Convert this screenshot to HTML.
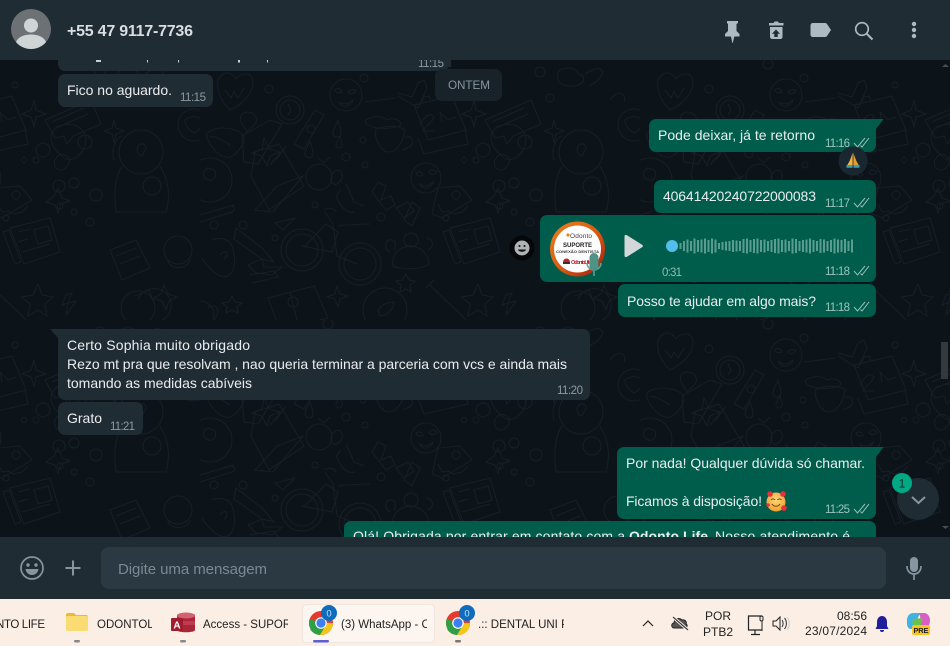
<!DOCTYPE html>
<html><head><meta charset="utf-8"><style>
html,body{margin:0;padding:0;width:950px;height:646px;overflow:hidden;background:#0c1319}
svg{display:block}
text{font-family:"Liberation Sans","DejaVu Sans",sans-serif;white-space:pre}
.m{font-size:14px;fill:#e9edef}
.t{font-size:11.5px;fill:#8e9aa2}
.to{font-size:11.5px;fill:#9cc4bb}
.b{font-size:11.5px;fill:#1f1f1f}
</style></head><body>
<svg width="950" height="646" viewBox="0 0 950 646" xmlns="http://www.w3.org/2000/svg">
<defs>
<pattern id="wall" x="200" y="60" width="440" height="260" patternUnits="userSpaceOnUse">
<g fill="none" stroke="#161f26" stroke-width="1">
<path d="M18 20c6-12 16-6 18-1 6-8 18-7 17 5-1 12-14 22-23 26-8-8-14-18-12-30z"/><path d="M25 30l6 8 3-6 4 6 6-10"/>
<circle cx="69" cy="29" r="4"/><circle cx="90" cy="50" r="14"/><circle cx="90" cy="50" r="10"/><path d="M88 44l3 6-3 5"/>
<circle cx="146" cy="35" r="16"/><path d="M135 30c3-3 6-1 7 2-3 1-6 1-7-2zM148 32c2-3 6-3 8-1-2 3-6 4-8 1zM139 42c5 3 10 2 14-2-1 6-11 9-14 2z"/>
<path d="M198 36l20 12 9-20-3-8-6 3-6 14-14-4M195 38l-30 4"/><circle cx="164" cy="18" r="4"/><circle cx="128" cy="4" r="5"/>
<path d="M214 45l38-9 14 34-38 10z"/><path d="M222 42l2-5 5-1 2 5M220 65c3-6 9-14 14-8-1 5-8 8-11 14h12M242 62l-2-10 8 8 8-3"/><path d="M218 78l6 16 44-10-3-14"/>
<path d="M285 60l46-20 10 24-28 12-6 8-3-8-9 2z"/><path d="M292 62l32-14M296 68l32-14"/>
<path d="M274 40l2 10 10 4-10 3-2 10-3-10-9-3 9-4z"/><path d="M354 60l2 8 8 3-8 3-2 9-2-9-8-3 8-3z"/><circle cx="340" cy="12" r="5"/><circle cx="350" cy="38" r="4"/>
<path d="M360 10c8-4 16-2 18 4 6 0 8 8 2 10-6 4-20 2-22-4-1-5 0-8 2-10z"/>
<path d="M182 48c-2 6-5 9-5 13 0 6 8 5 8 0 0-4-2-8-3-13z" transform="translate(-44 12)"/>
<path d="M42 76l28-16 12 4-24 40-14-2zM115 50l9 5-20 34-10-5z"/><circle cx="111" cy="69" r="4"/>
<path d="M7 73c10-8 26-5 34 0 4 4 4 8 0 14-4 6-10 12-16 10-8-2-20-16-18-24z"/><path d="M30 85c-6-4-16-10-20-8"/>
<path d="M64 78l5 11 11 3-10 4-3 10-5-10-10-3 10-4z"/><path d="M72 60c7 0 12 6 8 12l-8 8-6-10c-2-5 1-10 6-10z" transform="translate(-25 -8)"/>
<path d="M110 82c-3 6-5 8-5 12 0 5 8 5 8 0 0-4-1-7-3-12zM140 76c-2 4-4 6-4 9 0 4 6 4 6 0 0-3-1-6-2-9z"/>
<path d="M175 70c12-6 25-4 30 0-2 12-8 22-16 22-8 0-14-12-14-22zM205 78c6-4 10 2 6 8l-8 4"/><path d="M165 62c2-5 14-8 22-2 6-3 14 0 14 5-8 5-30 5-36-3z"/>
<path d="M55 92l24-8 25 42-35 24-18-34z"/><path d="M76 100l10-14"/><path d="M70 105l10-12"/><path d="M55 150l22-24 26-10-30 36z"/>
<circle cx="119" cy="117" r="13"/><path d="M134 112c4-4 10 0 8 6-2 4-6 8-8 6-4-2-4-8 0-12z"/><path d="M118 98l6 5 6-6"/>
<circle cx="226" cy="118" r="15"/><path d="M216 113c3-2 6-1 7 2-3 2-6 1-7-2zM229 112c2-3 6-2 8 0-2 3-6 4-8 0zM220 124c4 3 9 2 13-2-1 6-11 9-13 2z"/>
<path d="M301 95c-10-8-14-20-4-28 8-4 18-4 24 2 8 8 6 20-4 28-6 4-12 3-16-2z"/><circle cx="283" cy="90" r="7"/><circle cx="325" cy="82" r="7"/><path d="M295 100c4-8 10-6 14-2 2 6-4 12-8 12s-8-4-6-10z"/><circle cx="299" cy="126" r="6"/><circle cx="314" cy="123" r="5"/>
<circle cx="381" cy="92" r="22"/><path d="M378 86c4-4 8-2 8 2l-4 8c-4 0-6-6-4-10z"/><path d="M362 106c-8 12-8 30-6 46h50c4-14 4-30-6-46"/><path d="M354 100c-4-12 4-24 8-24"/><circle cx="392" cy="126" r="9"/>
<circle cx="434" cy="65" r="16"/><path d="M425 60c6-5 18-5 18 4-3 6-9 9-9 9s-10-6-9-13z"/>
<path d="M385 14c8-5 14-8 18-2-2 8-10 12-14 14"/><path d="M410 40c6-10 18-8 14 2"/>
<circle cx="10" cy="120" r="22"/><path d="M8 108c-6 2-6 10 0 12s10-6 6-10z"/>
<path d="M141 130c-4 4-6 6-2 12 4 8 10 12 16 10"/><path d="M146 124l8 18 10 4"/>
<path d="M178 122l8 4-5 14 10-4 4 9-9 5-14-18zM196 148l12-6 6 9-10 7zM212 142l8 6-8 18-8-6z"/>
<path d="M240 122l22-2 12 14-30 18-10-4z" transform="translate(-2 6)"/><circle cx="256" cy="135" r="4"/><path d="M238 144l4 8 6-1 6 3 8-2 6-6"/>
<path d="M294 136l4-8 4 10 8 3-9 3-3 9-3-8-9-3z"/><circle cx="336" cy="135" r="6"/><circle cx="300" cy="146" r="3"/>
<circle cx="43" cy="165" r="4"/><circle cx="75" cy="178" r="3"/><circle cx="14" cy="165" r="4"/><circle cx="181" cy="157" r="4"/><circle cx="146" cy="97" r="4"/><circle cx="165" cy="105" r="3"/><circle cx="115" cy="145" r="3"/><circle cx="163" cy="80" r="3"/><circle cx="276" cy="100" r="3"/><circle cx="255" cy="25" r="3"/><circle cx="264" cy="100" r="2.5"/><circle cx="246" cy="158" r="3"/><circle cx="330" cy="162" r="4"/><circle cx="314" cy="152" r="3"/>
<path d="M36 168l26 20 12 14-12-3-28-20z"/><path d="M0 155l34-10"/><path d="M0 162l32-10c3-1 3-5 0-6"/>
<path d="M75 163l20-5-12 12z"/>
<circle cx="102" cy="190" r="21"/><circle cx="102" cy="190" r="16"/><circle cx="160" cy="204" r="21"/><circle cx="160" cy="204" r="16"/><path d="M105 186l21-22 12 8-6 20-30-6zM125 152l8 12 4 32 20 8M124 150c4-3 10-2 12 2M138 166c6-1 24-2 32-2"/>
<path d="M193 206c-2-10 4-18 16-20 10 0 18 6 20 16 0 8-28 8-36 4z"/><circle cx="211" cy="180" r="7"/><path d="M190 192c-8-4-4-14 2-12 4 0 4 6 2 10M228 190c8-4 4-12-2-12"/>
<path d="M250 168l40-10 10 34-36 12zM243 172l6-2 12 32-6 2z"/><path d="M258 172l12-3M258 182l10-3M262 192l28-8M274 170l14-4 4 14-14 4z"/>
<path d="M12 180c8-4 18 0 20 6 4 12 4 24-4 30-8 4-20-8-26-18"/><path d="M20 195c6-8 10 0 4 4"/>
<path d="M48 205l14-6 2 8 18 0-10 8-16-2z"/><path d="M50 215l24-4 4 6-26 6"/>
<path d="M68 238l46-12 14 32-48 12z"/><path d="M90 232l8 32"/><circle cx="93" cy="242" r="5"/>
<path d="M137 226l3 8 8 2-8 3-2 8-3-8-8-2 8-3z"/><path d="M206 214l3 6 6 1-5 4 1 7-5-3-6 3 1-7-5-4 6-1z"/><path d="M278 224l4 11 11 2-8 7 2 12-9-6-10 6 2-12-9-7 12-2z"/><path d="M32 236l3 6 7 1-5 4 1 6-6-3-6 3 1-6-5-4 7-1z"/>
<circle cx="185" cy="250" r="22"/><path d="M178 250c6-8 14-8 16-8 0 6-6 14-14 14z"/>
<path d="M230 225l8 8 44 42M234 220l-8 8"/><path d="M306 235l6-2-4 10 8-2-10 14 2-12-6 2z"/>
<path d="M395 246l-6-16 -14 6M378 240a17 17 0 1 1 20 22"/><circle cx="378" cy="248" r="17"/>
<path d="M8 248c8-6 14 2 6 12"/><circle cx="0" cy="255" r="14"/>
<circle cx="418" cy="190" r="14"/><path d="M408 200c0 10 20 10 22 0"/>
<path d="M350 190l26-10 14 28-28 12z"/><path d="M356 196l20-8M360 204l20-8"/>
<path d="M404 225l4 9 9 3-8 4-3 9-4-9-9-3 8-4z"/>
</g>
</pattern>
<g id="tk" fill="none" stroke="#9fbdb6" stroke-width="1"><path d="M0 6l3.500 4L11 1M6.500 8.500L8 10l7-9"/></g>
<linearGradient id="ring" x1="0" y1="0" x2="1" y2="1"><stop offset="0" stop-color="#e8801f"/><stop offset=".55" stop-color="#d65a12"/><stop offset="1" stop-color="#9e1111"/></linearGradient>
<radialGradient id="emo" cx=".5" cy=".4" r=".6"><stop offset="0" stop-color="#fbd97a"/><stop offset="1" stop-color="#f0a030"/></radialGradient>
<clipPath id="cc"><rect x="0" y="60" width="950" height="477"/></clipPath>
<clipPath id="cw"><rect x="302" y="600" width="125" height="40"/></clipPath>
<clipPath id="cd"><rect x="470" y="600" width="94" height="40"/></clipPath>
<clipPath id="ca"><rect x="200" y="600" width="88" height="40"/></clipPath>
<clipPath id="co"><rect x="90" y="600" width="62" height="40"/></clipPath>
<g id="chrome"><circle r="12" fill="#e33b2e"/><path d="M-10.400 -6A12 12 0 0 0 -6 10.400L0 0z" fill="#2f9e44" transform="rotate(-10)"/><path d="M12 0A12 12 0 0 1 -4 11.300L0 4 5 0z" fill="#f5c518"/><path d="M-11 6A12 12 0 0 0 -1 12L5 2 0 5z" fill="#2f9e44"/><circle r="5.800" fill="#fff"/><circle r="4.600" fill="#3d7ff0"/></g>
</defs>

<rect width="950" height="646" fill="#0c1319"/>
<g clip-path="url(#cc)">
<rect y="60" width="950" height="477" fill="url(#wall)"/>

<!-- partial -->
<path d="M58 50h393v17h-3a7 4 0 0 1-7 4H65a7 7 0 0 1-7-7z" fill="#202c33"/>
<g fill="#c8ced1"><rect x="96" y="60" width="5" height="2"/><rect x="147" y="60" width="1" height="2.500"/><rect x="178" y="60" width="1" height="2.500"/><rect x="238" y="60" width="2" height="2.500"/><rect x="267" y="60" width="1" height="2.500"/></g>
<text x="418" y="67" class="t" textLength="26" fill="#8696a0">11:15</text>

<rect x="58" y="74" width="155" height="33" rx="7" fill="#202c33"/>
<text x="67" y="95" class="m" textLength="105">Fico no aguardo.</text>
<text x="180" y="101" class="t" textLength="26">11:15</text>

<rect x="435" y="69" width="67" height="32" rx="7" fill="#182229"/>
<text x="448" y="89" font-size="11.700" fill="#8696a0" textLength="42">ONTEM</text>

<!-- out 1 -->
<path d="M649 126a7 7 0 0 1 7-7h227.500l-7.500 10v16a7 7 0 0 1-7 7H656a7 7 0 0 1-7-7z" fill="#005c4b"/>
<text x="658" y="140" class="m" textLength="157">Pode deixar, já te retorno</text>
<text x="825" y="147" class="to" textLength="25">11:16</text>
<use href="#tk" x="854" y="137"/>
<circle cx="853" cy="161" r="14.500" fill="#1a2730"/>
<path d="M852.600 152.500c-.8 3-2 6-3 8.500l-2.500 4.500 5.500.5z" fill="#f2b43f"/><path d="M853.400 152.500c.8 3 2 6 3 8.500l2.500 4.500-5.500.5z" fill="#e89e2c"/><path d="M846.500 165h6v2.800h-6zM853.500 165h6v2.800h-6z" fill="#3aa0b5"/>

<rect x="654" y="180" width="222" height="33" rx="7" fill="#005c4b"/>
<text x="663" y="201" class="m" textLength="153">40641420240722000083</text>
<text x="825" y="207" class="to" textLength="25">11:17</text>
<use href="#tk" x="854" y="197"/>

<!-- audio -->
<circle cx="522" cy="248" r="12.500" fill="#050708"/>
<circle cx="522" cy="248" r="7.500" fill="#aeb3b6"/>
<circle cx="519.500" cy="246" r="1" fill="#111"/><circle cx="524.500" cy="246" r="1" fill="#111"/><path d="M518 249.500h8c-.5 3-7.500 3-8 0z" fill="#111"/>
<rect x="540" y="215" width="336" height="67" rx="7" fill="#005c4b"/>
<circle cx="577.500" cy="249" r="27.500" fill="url(#ring)"/>
<circle cx="577.500" cy="249" r="23.500" fill="#fdfdfd"/>
<path d="M566 235l2-2 2 2-2 2z" fill="#e8801f"/>
<text x="570" y="238" font-size="6.500" fill="#444" textLength="22">Odonto</text>
<text x="563" y="247" font-size="6" font-weight="700" fill="#222" textLength="29">SUPORTE</text>
<text x="556" y="253" font-size="4" font-weight="700" fill="#333" textLength="43">CONEXÃO DENTISTA</text>
<path d="M563 262a3.500 3.500 0 0 1 7 0z" fill="#c8202a"/><rect x="563" y="262" width="7" height="2" fill="#333"/>
<text x="571" y="264" font-size="5.500" font-weight="700" fill="#b81c26" textLength="20">OdontoLife</text>
<path d="M587 263a7 7 0 0 0 14 0" fill="none" stroke="#5fa598" stroke-width="1.500"/><path d="M594 270v6" stroke="#5fa598" stroke-width="1.500"/>
<rect x="589.500" y="253" width="9" height="18" rx="4.500" fill="#4f9387"/>
<path d="M624.500 236.500c0-1.500 1-2 2.500-1.300l15 9.500c1.200.8 1.200 1.800 0 2.600l-15 9.500c-1.500.8-2.500.2-2.500-1.300z" fill="#d3d7d9"/>
<path d="M680.500 243v6M684 241v10M687.500 239.500v13M691 241v10M694.500 238.500v15M698 240v12M701.500 239.500v13M705 238.500v15M708.500 240v12M712 238.500v15M715.500 239.500v13M719 243v6M722.500 242v8M726 241.500v9M729.500 241v10M733 240v12M736.500 240.500v11M740 241v10M743.500 239v14M747 238.500v15M750.500 240v12M754 239v14M757.500 238.500v15M761 240v12M764.500 239.500v13M768 241v10M771.500 240v12M775 239v14M778.500 238.500v15M782 240v12M785.500 239.500v13M789 241v10M792.500 238.500v15M796 239v14M799.500 241v10M803 240v12M806.500 239.500v13M810 238.500v15M813.500 240v12M817 241v10M820.500 239v14M824 239.500v13M827.500 241v10M831 240v12M834.500 238.500v15M838 239.500v13M841.500 240v12M845 239v14M848.500 241v10M852 239.500v13" stroke="#5a9c8f" stroke-width="2" fill="none"/>
<circle cx="672" cy="246" r="6" fill="#53bdeb"/>
<text x="662" y="276" font-size="11.500" fill="#8fbdb3" textLength="20">0:31</text>
<text x="825" y="275" class="to" textLength="25">11:18</text>
<use href="#tk" x="854" y="265"/>

<rect x="618" y="284" width="258" height="33" rx="7" fill="#005c4b"/>
<text x="627" y="306" class="m" textLength="189">Posso te ajudar em algo mais?</text>
<text x="825" y="311" class="to" textLength="25">11:18</text>
<use href="#tk" x="854" y="301"/>

<!-- in -->
<path d="M50 329h533a7 7 0 0 1 7 7v57a7 7 0 0 1-7 7H65a7 7 0 0 1-7-7v-55z" fill="#202c33"/>
<text x="67" y="350" class="m" textLength="183">Certo Sophia muito obrigado</text>
<text x="67" y="369" class="m" textLength="500">Rezo mt pra que resolvam , nao queria terminar a parceria com vcs e ainda mais</text>
<text x="67" y="388" class="m" textLength="185">tomando as medidas cabíveis</text>
<text x="557" y="394" class="t" textLength="26">11:20</text>

<rect x="58" y="402" width="85" height="33" rx="7" fill="#202c33"/>
<text x="67" y="423" class="m" textLength="35">Grato</text>
<text x="110" y="430" class="t" textLength="25">11:21</text>

<!-- out last -->
<path d="M617 454a7 7 0 0 1 7-7h259.500l-7.500 10v55a7 7 0 0 1-7 7H624a7 7 0 0 1-7-7z" fill="#005c4b"/>
<text x="626" y="468" class="m" textLength="239">Por nada! Qualquer dúvida só chamar.</text>
<text x="626" y="506" class="m" textLength="136">Ficamos à disposição!</text>
<circle cx="776" cy="502" r="9.500" fill="url(#emo)"/>
<path d="M771 500c1-1.500 3-1.500 4 0M777.500 500c1-1.500 3-1.500 4 0M772 504c2 3 6 3 8 0" fill="none" stroke="#7a4a10" stroke-width="1.100"/>
<g fill="#e8303a"><circle cx="770" cy="494" r="2.800"/><circle cx="783" cy="494" r="2.800"/><circle cx="784" cy="508" r="2.800"/><circle cx="768" cy="505" r="1.800"/></g>
<text x="825" y="513" class="to" textLength="25">11:25</text>
<use href="#tk" x="854" y="503"/>

<path d="M344 528a7 7 0 0 1 7-7h518a7 7 0 0 1 7 7v20H344z" fill="#005c4b"/>
<text x="353" y="541" class="m" textLength="272">Olá! Obrigada por entrar em contato com a</text>
<text x="629" y="541" class="m" font-weight="700" textLength="79">Odonto Life</text>
<text x="708" y="541" class="m">.</text>
<text x="715" y="541" class="m" textLength="135">Nosso atendimento é</text>

<circle cx="918" cy="499" r="21" fill="#202c33"/>
<path d="M912 497l6.500 6 6.500-6" fill="none" stroke="#8696a0" stroke-width="2"/>
<circle cx="902" cy="483" r="10" fill="#00a884"/>
<text x="902" y="487.500" font-size="12" fill="#0e2a26" text-anchor="middle">1</text>

<rect x="941" y="342" width="7" height="37" fill="#33393d"/>
<path d="M942 67l3.500-3 3.500 3z M942 526l3.500 3 3.500-3z" fill="#4a4f53"/>
</g>

<!-- header -->
<rect width="950" height="60" fill="#202c33"/>
<circle cx="31" cy="29" r="20" fill="#6b7175"/>
<circle cx="31" cy="25.500" r="7" fill="#cfd4d6"/>
<path d="M16 42c2-5 8-7.500 15-7.500s13 2.500 15 7.500c-3 4-9 7-15 7s-12-3-15-7z" fill="#cfd4d6"/>
<text x="67" y="36" font-size="16" font-weight="700" fill="#d8dee1" textLength="126">+55 47 9117-7736</text>
<!-- pin -->
<path d="M727 21h11v2l-1.500 1v7l3 3v2.500h-5.200l-.8 3.500-.8 3h-.4l-1.300-6.500H725V34l3-3v-7l-1-1z" fill="#aebac1"/>
<!-- trash/unarchive -->
<path d="M769 23h4.500l1-1.500h3.500l1 1.500h4.500v2.500H769z" fill="#aebac1"/>
<path d="M770 27h12.500v10c0 1-.8 2-2 2H772c-1 0-2-1-2-2z" fill="#aebac1"/>
<path d="M776 29.500l4 4.200h-2.300V37h-3.400v-3.300H772z" fill="#202c33"/>
<!-- tag -->
<path d="M813 23h12c1 0 1.500.4 2 1l4 6-4 6c-.5.600-1 1-2 1h-12c-1.500 0-2.500-1-2.500-2.500v-9c0-1.500 1-2.500 2.500-2.500z" fill="#aebac1"/>
<!-- search -->
<circle cx="862" cy="29" r="6.300" fill="none" stroke="#aebac1" stroke-width="1.700"/>
<path d="M866.800 33.800l5.700 5.700" stroke="#aebac1" stroke-width="2"/>
<!-- dots -->
<circle cx="914" cy="24" r="2.200" fill="#aebac1"/><circle cx="914" cy="30" r="2.200" fill="#aebac1"/><circle cx="914" cy="36" r="2.200" fill="#aebac1"/>

<!-- footer -->
<rect y="537" width="950" height="62" fill="#202c33"/>
<circle cx="32" cy="568" r="11" fill="none" stroke="#8696a0" stroke-width="1.700"/>
<circle cx="28" cy="565" r="1.700" fill="#8696a0"/><circle cx="36" cy="565" r="1.700" fill="#8696a0"/>
<path d="M25.500 569h13c-.5 4-3.500 6-6.500 6s-6-2-6.500-6z" fill="#8696a0"/>
<path d="M73 560.500v15M65.500 568h15" stroke="#8696a0" stroke-width="2"/>
<rect x="101" y="547" width="785" height="42" rx="8" fill="#2a3942"/>
<text x="118" y="574" font-size="15" fill="#798a95" textLength="149">Digite uma mensagem</text>
<rect x="910" y="557" width="8" height="15" rx="4" fill="#8696a0"/>
<path d="M907 566c0 5 3 8 7 8s7-3 7-8M914 574v6" fill="none" stroke="#8696a0" stroke-width="1.700"/>

<!-- taskbar -->
<rect y="599" width="950" height="47" fill="#fbeee4"/>
<text x="-4" y="628" class="b" textLength="49">NTO LIFE</text>
<path d="M66 615a2 2 0 0 1 2-2h6l2 2h10a2 2 0 0 1 2 2v2H66z" fill="#e8b93a"/>
<rect x="66" y="616" width="22" height="15" rx="1.500" fill="#fbdc72"/>
<rect x="74" y="640" width="6" height="2.500" rx="1.200" fill="#888"/>
<g clip-path="url(#co)"><text x="97" y="628" class="b">ODONTOLIFE</text></g>
<path d="M177 615c0-2 18-2 18 0v15c0 3-18 3-18 0z" fill="#a8263a"/><ellipse cx="186" cy="615.500" rx="9" ry="3" fill="#d3616f"/><rect x="177" y="621" width="18" height="4" fill="#c23a4e"/>
<rect x="171" y="618" width="12" height="13" rx="1" fill="#a01c2c"/>
<text x="177" y="628.500" font-size="10" font-weight="700" fill="#fff" text-anchor="middle">A</text>
<rect x="180" y="640" width="6" height="2.500" rx="1.200" fill="#888"/>
<g clip-path="url(#ca)"><text x="203" y="628" class="b">Access - SUPORTE</text></g>

<rect x="302.500" y="604.500" width="132" height="38" rx="4" fill="#fdf5f0" stroke="#f0e6df"/>
<use href="#chrome" x="321" y="623"/>
<circle cx="329" cy="613" r="8" fill="#0f6cbd"/>
<text x="329" y="616.500" font-size="9.500" fill="#bfe3f8" text-anchor="middle">0</text>
<rect x="313" y="640" width="16" height="2.500" rx="1.200" fill="#5b5fd6"/>
<g clip-path="url(#cw)"><text x="341" y="628" class="b">(3) WhatsApp - C</text></g>

<use href="#chrome" x="458" y="623"/>
<circle cx="467" cy="613" r="8" fill="#0f6cbd"/>
<text x="467" y="616.500" font-size="9.500" fill="#bfe3f8" text-anchor="middle">0</text>
<rect x="455" y="640" width="6" height="2.500" rx="1.200" fill="#777"/>
<g clip-path="url(#cd)"><text x="478" y="628" class="b">.:: DENTAL UNI P</text></g>

<path d="M643 626l5-5 5 5" fill="none" stroke="#222" stroke-width="1.200"/>
<path d="M674 628c-3 0-3-5 0-5 0-4 5-6 8-3 3-1 5 2 4 4 2 1 1 4-1 4z" fill="#555" stroke="#222"/>
<path d="M673 617l15 13" stroke="#fbeee4" stroke-width="3"/><path d="M673 617l15 13" stroke="#222" stroke-width="1.100"/>
<text x="718" y="620" font-size="12" fill="#222" text-anchor="middle">POR</text>
<text x="718" y="636" font-size="12" fill="#222" text-anchor="middle">PTB2</text>
<path d="M762 616h-13.500v14h13.500M755 630v4M751 634.500h9" fill="none" stroke="#222" stroke-width="1.200"/>
<rect x="760" y="616" width="3" height="5" rx="1.500" fill="none" stroke="#222"/><path d="M762 621v10" stroke="#222"/>
<path d="M773 621h3l4-4v13l-4-4h-3z" fill="none" stroke="#222"/><path d="M782 620c1.500 2 1.500 5 0 7M784.500 618c2.500 3 2.500 8 0 11" fill="none" stroke="#333"/><path d="M787 617c3 4 3 9 0 13" fill="none" stroke="#ccc"/>
<text x="867" y="620" font-size="12" fill="#222" text-anchor="end">08:56</text>
<text x="867" y="635" font-size="12" fill="#222" text-anchor="end" textLength="62">23/07/2024</text>
<path d="M882 616c-3 0-5 2.500-5 6v4l-1.500 3h13l-1.500-3v-4c0-3.500-2-6-5-6z" fill="#1f1f9a"/><path d="M880 630a2 2 0 0 0 4 0z" fill="#1f1f9a"/>
<path d="M907 620c0-4 3-7 6-7h8c-3 3-4 7-5 11-1 3-3 5-5 5-3 0-4-3-4-6z" fill="#3fb4e4"/>
<path d="M918 613h6c3 0 6 3 6 7 0 4-2 10-6 10h-8c3-3 3-7 4-11 .5-3 0-5-2-6z" fill="#d95fc6"/>
<path d="M912 621c2-3 8-3 11-2l-3 8c-3 1-6 0-8-6z" fill="#6cc04a"/>
<rect x="912" y="625" width="18" height="10" rx="2" fill="#f7c325"/>
<text x="921" y="632.800" font-size="7.500" font-weight="700" fill="#222" text-anchor="middle" textLength="15">PRE</text>
</svg>
</body></html>
